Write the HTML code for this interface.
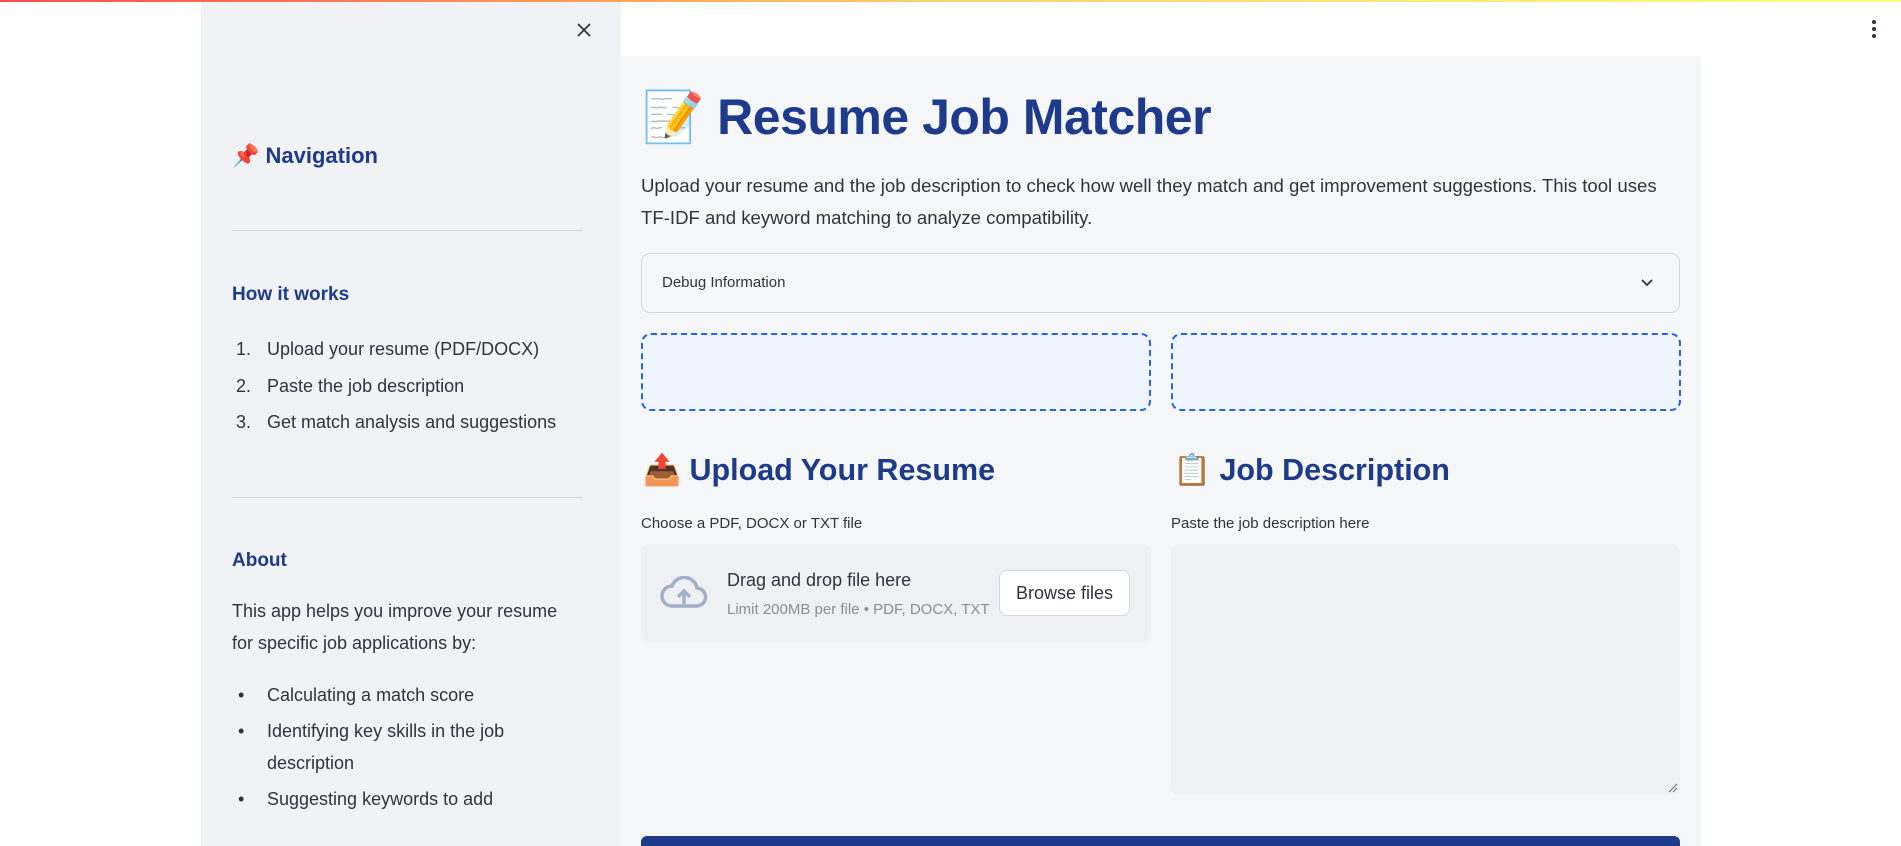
<!DOCTYPE html>
<html><head><meta charset="utf-8"><style>
*{margin:0;padding:0;box-sizing:border-box}
body{width:1901px;height:846px;overflow:hidden;background:#fff;font-family:"Liberation Sans",sans-serif;color:#31333f;position:relative}
.a{position:absolute;white-space:nowrap}
.top{left:0;top:0;width:1901px;height:2px;background:linear-gradient(90deg,#ff4b4b,#ffd16a,#fffd80);z-index:5}
.side{left:201px;top:0;width:420px;height:846px;background:#f0f2f6}
.main{left:621px;top:56px;width:1080px;height:790px;background:#f5f6f8}
.h{color:#1e3a8a;font-weight:bold}
.t{font-size:18px;line-height:24px;transform:translateY(-12px)}
.hr{height:1px;background:#d0d2d8;left:232px;width:351px}
.dash{border:2px dashed #2563eb;background:#eef5fe;border-radius:10px;top:333px;height:78px;width:510px}
</style></head><body>
<div class="a top"></div>
<div class="a side"></div>
<div class="a main"></div>
<svg class="a" style="left:576px;top:22px" width="16" height="16" viewBox="0 0 16 16"><path d="M2 2L14 14M14 2L2 14" stroke="#31333f" stroke-width="1.8"/></svg>
<svg class="a" style="left:1870px;top:19px" width="8" height="20"><circle cx="4" cy="3" r="2" fill="#31333f"/><circle cx="4" cy="10" r="2" fill="#31333f"/><circle cx="4" cy="17" r="2" fill="#31333f"/></svg>

<div class="a h" style="left:232px;top:143px;font-size:22px">📌 Navigation</div>
<div class="a hr" style="top:230px"></div>
<div class="a h" style="left:232px;top:284px;font-size:19px">How it works</div>
<div class="a t" style="left:236px;top:349px">1.</div><div class="a t" style="left:267px;top:349px">Upload your resume (PDF/DOCX)</div>
<div class="a t" style="left:236px;top:386px">2.</div><div class="a t" style="left:267px;top:386px">Paste the job description</div>
<div class="a t" style="left:236px;top:422px">3.</div><div class="a t" style="left:267px;top:422px">Get match analysis and suggestions</div>
<div class="a hr" style="top:497px"></div>
<div class="a h" style="left:232px;top:550px;font-size:19px">About</div>
<div class="a t" style="left:232px;top:611px">This app helps you improve your resume</div>
<div class="a t" style="left:232px;top:643px">for specific job applications by:</div>
<div class="a t" style="left:238px;top:695px">•</div><div class="a t" style="left:267px;top:695px">Calculating a match score</div>
<div class="a t" style="left:238px;top:731px">•</div><div class="a t" style="left:267px;top:731px">Identifying key skills in the job</div>
<div class="a t" style="left:267px;top:763px">description</div>
<div class="a t" style="left:238px;top:799px">•</div><div class="a t" style="left:267px;top:799px">Suggesting keywords to add</div>

<div class="a h" style="left:642px;top:85px;font-size:50px;line-height:64px;letter-spacing:-0.5px">📝 Resume Job Matcher</div>
<div class="a t" style="left:641px;top:186px;font-size:18.6px">Upload your resume and the job description to check how well they match and get improvement suggestions. This tool uses</div>
<div class="a t" style="left:641px;top:218px;font-size:18.6px">TF-IDF and keyword matching to analyze compatibility.</div>
<div class="a" style="left:641px;top:253px;width:1039px;height:60px;border:1px solid #d4d6dc;border-radius:9px"></div>
<div class="a" style="left:662px;top:274px;font-size:15px">Debug Information</div>
<svg class="a" style="left:1640px;top:275px" width="14" height="14" viewBox="0 0 14 14"><path d="M2 5L7 10L12 5" stroke="#31333f" stroke-width="1.8" fill="none"/></svg>
<div class="a dash" style="left:641px"></div>
<div class="a dash" style="left:1171px"></div>

<div class="a h" style="left:643px;top:450px;font-size:30.5px;line-height:40px">📤 Upload Your Resume</div>
<div class="a h" style="left:1173px;top:450px;font-size:30.5px;line-height:40px">📋 Job Description</div>
<div class="a" style="left:641px;top:515px;font-size:15px">Choose a PDF, DOCX or TXT file</div>
<div class="a" style="left:1171px;top:515px;font-size:15px">Paste the job description here</div>
<div class="a" style="left:641px;top:544px;width:510px;height:99px;background:#eef0f4;border-radius:9px"></div>
<svg class="a" style="left:660px;top:576px" width="48" height="34" viewBox="0 0 48 34"><path d="M12 30H36a9 9 0 0 0 1-18A13 13 0 0 0 12 10a10 10 0 0 0 0 20z" fill="none" stroke="#a3afc8" stroke-width="3.5"/><path d="M24 28V16M18 21L24 15L30 21" stroke="#a3afc8" stroke-width="3.5" fill="none"/></svg>
<div class="a" style="left:727px;top:570px;font-size:18px">Drag and drop file here</div>
<div class="a" style="left:727px;top:601px;font-size:15px;color:#8b8d98">Limit 200MB per file • PDF, DOCX, TXT</div>
<div class="a" style="left:999px;top:570px;width:131px;height:46px;background:#fff;border:1px solid #d4d6dc;border-radius:8px;font-size:18px;text-align:center;line-height:44px">Browse files</div>
<div class="a" style="left:1171px;top:544px;width:509px;height:251px;background:#eef0f4;border-radius:9px"></div>
<svg class="a" style="left:1668px;top:783px" width="10" height="10"><path d="M1 9L9 1M5 9L9 5" stroke="#666" stroke-width="1"/></svg>
<div class="a" style="left:641px;top:836px;width:1039px;height:10px;background:#1e3a8a;border-radius:6px 6px 0 0"></div>
</body></html>
